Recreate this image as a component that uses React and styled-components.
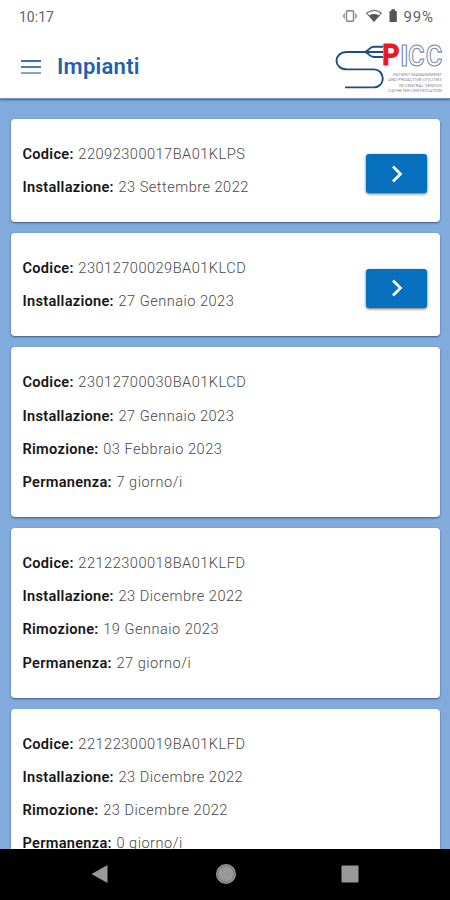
import React from 'react'
import styled, { createGlobalStyle } from 'styled-components'

const GlobalStyle = createGlobalStyle`
  * {
    box-sizing: border-box;
  }
  body {
    margin: 0;
    font-family: Roboto, sans-serif;
    overflow: hidden;
  }
`

const Screen = styled.div`
  background: #81aadd;
  display: flex;
  flex-direction: column;
  height: 900px;
  width: 450px;
`

const Header = styled.header`
  background: white;
  border-bottom: 1px solid #6a91ba;
  box-shadow: 0 1px 2px rgba(20, 60, 100, 0.65);
  flex: none;
  height: 99px;
`

const StatusBar = styled.div`
  align-items: center;
  color: #646464;
  display: flex;
  font-size: 14px;
  height: 33px;
  justify-content: space-between;
  padding: 0 16px 0 19px;
`

const Clock = styled.span`
  letter-spacing: 0;
`

const StatusIcons = styled.div`
  align-items: center;
  display: flex;
  & > svg {
    margin-bottom: 2px;
  }
  & > span {
    font-size: 15px;
    letter-spacing: 0.9px;
    margin-left: 5px;
  }
`

const Toolbar = styled.div`
  align-items: center;
  display: flex;
  height: 66px;
  padding-left: 21px;
`

const MenuButton = styled.button`
  background: none;
  border: 0;
  display: flex;
  flex-direction: column;
  gap: 4px;
  padding: 1px 0 0;
  width: 20px;
`

const MenuBar = styled.span`
  background: ${({ $color }) => $color};
  height: 2px;
  width: 100%;
`

const Title = styled.h1`
  color: #1e62ae;
  flex: 1;
  font-size: 22px;
  font-weight: 600;
  letter-spacing: 0.25px;
  line-height: 28px;
  margin: 1px 0 0 16px;
`

const List = styled.main`
  display: flex;
  flex: 1;
  flex-direction: column;
  gap: 10.7px;
  min-height: 0;
  overflow: hidden;
  padding: 19.6px 10px 0 11px;
`

const Card = styled.article`
  align-items: center;
  background: white;
  border-radius: 4px;
  box-shadow: 0 1px 2px rgba(20, 50, 85, 0.65);
  display: flex;
  flex: none;
  justify-content: space-between;
  padding: 19.2px 13px 18px 11.5px;
`

const Field = styled.p`
  color: #484848;
  font-size: 14.6px;
  font-weight: 300;
  letter-spacing: 0.48px;
  line-height: 33.2px;
  margin: 0;
  white-space: nowrap;
`

const Label = styled.strong`
  color: #161616;
  font-weight: 600;
  letter-spacing: 0.28px;
  margin-right: 0.6px;
`

const OpenButton = styled.button`
  align-items: center;
  background: #0670bf;
  border: 0;
  border-radius: 3px;
  box-shadow: 0 1px 3px rgba(0, 0, 0, 0.6);
  display: flex;
  height: 39px;
  justify-content: center;
  margin-top: 6px;
  padding: 0 0 0 1px;
  width: 61px;
`

const NavBar = styled.nav`
  align-items: center;
  background: black;
  display: flex;
  flex: none;
  height: 51.5px;
  justify-content: space-between;
  padding: 0 90px;
`

const implants = [
  {
    open: true,
    fields: [['Codice', '22092300017BA01KLPS'], ['Installazione', '23 Settembre 2022']]
  },
  {
    open: true,
    fields: [['Codice', '23012700029BA01KLCD'], ['Installazione', '27 Gennaio 2023']]
  },
  {
    fields: [
      ['Codice', '23012700030BA01KLCD'],
      ['Installazione', '27 Gennaio 2023'],
      ['Rimozione', '03 Febbraio 2023'],
      ['Permanenza', '7 giorno/i']
    ]
  },
  {
    fields: [
      ['Codice', '22122300018BA01KLFD'],
      ['Installazione', '23 Dicembre 2022'],
      ['Rimozione', '19 Gennaio 2023'],
      ['Permanenza', '27 giorno/i']
    ]
  },
  {
    fields: [
      ['Codice', '22122300019BA01KLFD'],
      ['Installazione', '23 Dicembre 2022'],
      ['Rimozione', '23 Dicembre 2022'],
      ['Permanenza', '0 giorno/i']
    ]
  }
]

const tagline = [
  ['PATIENT MANAGEMENT', 49],
  ['AND PROACTIVE UTILITIES', 54],
  ['IN CENTRAL VENOUS', 43],
  ['CATHETER CERTIFICATION', 54]
]

const Logo = () => (
  <svg width="115" height="60" viewBox="335 36 115 60">
    <g fill="none" stroke="#204e7c" strokeWidth="1.9">
      <path d="M345 87.4H374a8.8 9 0 0 0 0-18H347C333 69.4 333 52 347 52H383" />
      <path d="M365.5 51.5C369 51 369 46.8 374 46.8H383M365.5 52.3C369 53 369 57 374 57H383" />
    </g>
    <text x="382.2" y="65.3" fill="#ed1721" stroke="#ed1721" strokeWidth="1" fontFamily="Roboto, sans-serif" fontSize="29.5" fontWeight="700" textLength="17.2" lengthAdjust="spacingAndGlyphs">P</text>
    <g fill="white" stroke="#7187a4" strokeWidth="1.1" fontFamily="Roboto, sans-serif" fontSize="30" fontWeight="600">
      <text x="399.9" y="66">I</text>
      <text x="408" y="66" textLength="16.6" lengthAdjust="spacingAndGlyphs">C</text>
      <text x="425.7" y="66" textLength="16.6" lengthAdjust="spacingAndGlyphs">C</text>
    </g>
    <g fill="#82899b" fontFamily="Roboto, sans-serif" fontSize="4.4" textAnchor="end">
      {tagline.map(([line, width], i) => (
        <text key={line} x="442" y={75.8 + i * 5.4} textLength={width} lengthAdjust="spacingAndGlyphs">{line}</text>
      ))}
    </g>
  </svg>
)

const Status = () => (
  <StatusBar>
    <Clock>10:17</Clock>
    <StatusIcons>
      <svg width="56" height="16" viewBox="343 8 56 16">
        <rect x="347.5" y="10.8" width="7" height="10.4" rx="1" fill="none" stroke="#858585" strokeWidth="1.4" />
        <path d="M346 12.5L343.3 16L346 19.5ZM356 12.5L358.7 16L356 19.5Z" fill="#a5a5a5" />
        <path d="M367.7 13.1Q375 7.5 382.3 13.1L375 21.3Z" fill="none" stroke="#777" strokeWidth="1.2" />
        <path d="M370 15.4Q375 12.5 380 15.4L375 21.5Z" fill="#555" />
        <path d="M390.5 11H392.3V9.3H396V11H397.8V22H390.5Z" fill="#555" />
      </svg>
      <span>99%</span>
    </StatusIcons>
  </StatusBar>
)

const ImplantCard = ({ implant }) => (
  <Card>
    <div>
      {implant.fields.map(([label, value]) => (
        <Field key={label}><Label>{label}:</Label> {value}</Field>
      ))}
    </div>
    {implant.open && <OpenButton aria-label="Apri">
      <svg width="12" height="18" viewBox="0 0 12 18">
        <path d="M2 1.5L9.5 9L2 16.5" fill="none" stroke="white" strokeWidth="2.7" />
      </svg>
    </OpenButton>}
  </Card>
)

const App = () => (
  <>
    <GlobalStyle />
    <Screen>
      <Header>
        <Status />
        <Toolbar>
          <MenuButton aria-label="Menu">
            <MenuBar $color="#3d73af" />
            <MenuBar $color="#4a7db7" />
            <MenuBar $color="#83a4cd" />
          </MenuButton>
          <Title>Impianti</Title>
          <Logo />
        </Toolbar>
      </Header>
      <List>
        {implants.map(implant => (
          <ImplantCard key={implant.fields[0][1]} implant={implant} />
        ))}
      </List>
      <NavBar>
        <svg width="21" height="20" viewBox="0 0 21 20">
          <path d="M1.5 10L17.5 1V19Z" fill="#999" />
        </svg>
        <svg width="22" height="22" viewBox="0 0 22 22">
          <circle cx="11" cy="11" r="10" fill="#999" />
          <circle cx="11" cy="11" r="8.2" fill="none" stroke="#666" strokeWidth="0.8" />
        </svg>
        <svg width="20" height="18" viewBox="0 0 20 18">
          <rect x="1.5" y="0.5" width="17" height="17" rx="1" fill="#999" />
        </svg>
      </NavBar>
    </Screen>
  </>
)

export default App
